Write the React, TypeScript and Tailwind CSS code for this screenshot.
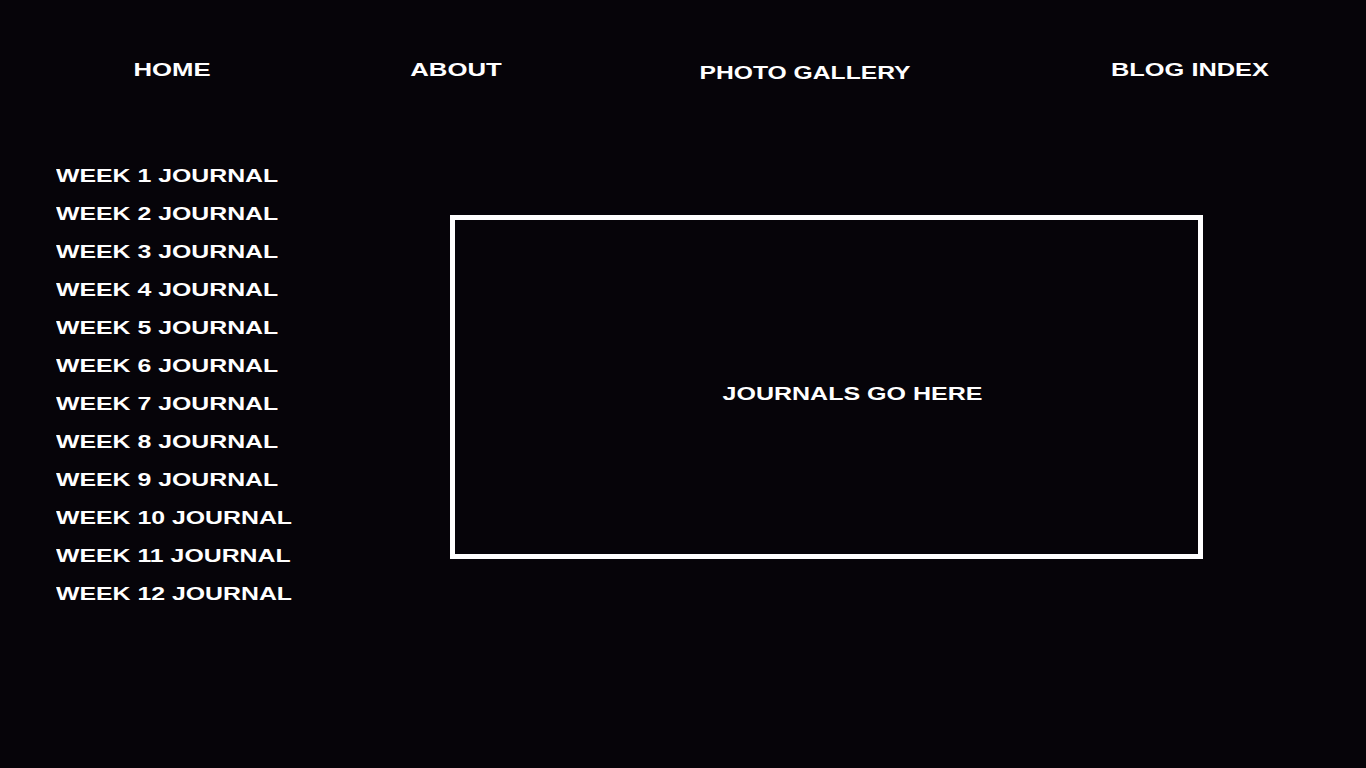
const navItems = [
  { label: 'HOME', cell: 'w-[343px]', nudge: '', scale: 'scale-x-[1.43]' },
  { label: 'ABOUT', cell: 'w-[225px]', nudge: '', scale: 'scale-x-[1.43]' },
  { label: 'PHOTO GALLERY', cell: 'w-[474px]', nudge: 'mt-[3px]', scale: 'scale-x-[1.37]' },
  { label: 'BLOG INDEX', cell: 'w-[296px]', nudge: '', scale: 'scale-x-[1.41]' },
];

const weeks = Array.from({ length: 12 }, (_, i) => `WEEK ${i + 1} JOURNAL`);

const App = () => {
  return (
    <div className="min-h-screen w-full bg-[#060409] text-white font-['Liberation_Sans',Arial,sans-serif] font-bold overflow-hidden">
      <nav className="flex pt-[58px]">
        {navItems.map((item) => (
          <div key={item.label} className={`${item.cell} ${item.nudge} text-center`}>
            <a href="#" className={`inline-block text-[18px] leading-[24px] ${item.scale} origin-center whitespace-nowrap`}>
              {item.label}
            </a>
          </div>
        ))}
      </nav>

      <div className="flex mt-[71px]">
        <ul className="w-[450px] pl-[56px]">
          {weeks.map((w) => (
            <li key={w} className="text-[18px] leading-[38px] whitespace-nowrap">
              <a href="#" className="inline-block scale-x-[1.38] origin-left">
                {w}
              </a>
            </li>
          ))}
        </ul>

        <main className="mt-[58px]">
          <div className="w-[753px] h-[344px] border-[5px] border-white flex items-center justify-center pl-[53px] pt-[14px]">
            <p className="text-[18px] leading-[24px] scale-x-[1.39] origin-center whitespace-nowrap">
              JOURNALS GO HERE
            </p>
          </div>
        </main>
      </div>
    </div>
  );
};

export default App;
